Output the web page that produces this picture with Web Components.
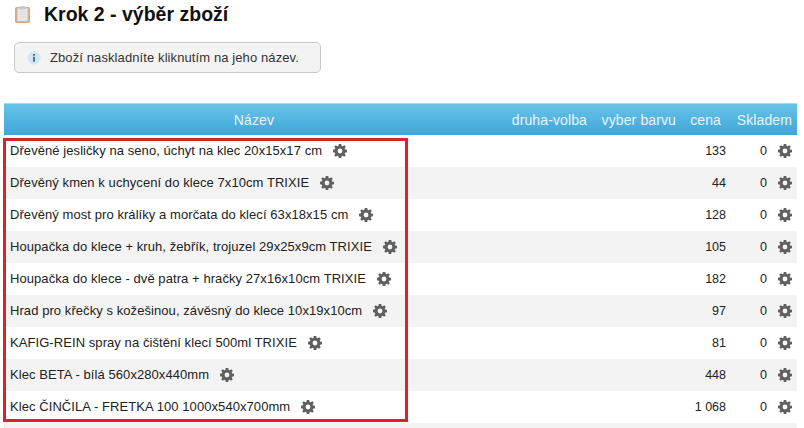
<!DOCTYPE html>
<html lang="cs"><head><meta charset="utf-8"><style>
html,body{margin:0;padding:0;background:#fff}
body{width:804px;height:428px;overflow:hidden;font-family:"Liberation Sans",Arial,sans-serif;color:#222}
</style></head><body>
<step-page>
<page-title slot="title">Krok 2 - výběr zboží</page-title>
<info-note slot="note">Zboží naskladníte kliknutím na jeho název.</info-note>
<goods-table slot="table">
<goods-row price="133">Dřevěné jesličky na seno, úchyt na klec 20x15x17 cm</goods-row>
<goods-row price="44">Dřevěný kmen k uchycení do klece 7x10cm TRIXIE</goods-row>
<goods-row price="128">Dřevěný most pro králíky a morčata do klecí 63x18x15 cm</goods-row>
<goods-row price="105">Houpačka do klece + kruh, žebřík, trojuzel 29x25x9cm TRIXIE</goods-row>
<goods-row price="182">Houpačka do klece - dvě patra + hračky 27x16x10cm TRIXIE</goods-row>
<goods-row price="97">Hrad pro křečky s kožešinou, závěsný do klece 10x19x10cm</goods-row>
<goods-row price="81">KAFIG-REIN spray na čištění klecí 500ml TRIXIE</goods-row>
<goods-row price="448">Klec BETA - bílá 560x280x440mm</goods-row>
<goods-row price="1 068">Klec ČINČILA - FRETKA 100 1000x540x700mm</goods-row>
<goods-row price=""></goods-row>
</goods-table>
</step-page>
<script>
const GEAR=`<svg width="14" height="14" viewBox="0 0 14 14" aria-hidden="true"><path fill="#5f5f5f" fill-rule="evenodd" d="M5.7 0h2.6l.35 1.9c.35.12.68.26 1 .45L11.2 1.2 12.8 2.8 11.65 4.4c.19.32.33.65.45 1L14 5.7v2.6l-1.9.35c-.12.35-.26.68-.45 1l1.15 1.55-1.6 1.6-1.55-1.15c-.32.19-.65.33-1 .45L8.3 14H5.7l-.35-1.9c-.35-.12-.68-.26-1-.45L2.8 12.8 1.2 11.2l1.15-1.55c-.19-.32-.33-.65-.45-1L0 8.3V5.7l1.9-.35c.12-.35.26-.68.45-1L1.2 2.8 2.8 1.2l1.55 1.15c.32-.19.65-.33 1-.45zM7 4.6a2.4 2.4 0 1 0 0 4.8 2.4 2.4 0 0 0 0-4.8z"/></svg>`;
function def(name,html){customElements.define(name,class extends HTMLElement{
 constructor(){super();this.attachShadow({mode:'open'}).innerHTML=html}});}
def('step-page',`<style>:host{display:block;position:relative;height:428px;overflow:hidden}
.wrap{display:flex;flex-direction:column;padding:0 4px 0 4px}
.red{position:absolute;left:3px;top:138px;width:399px;height:278px;border:3px solid #d9222c;pointer-events:none}
</style><div class="wrap"><slot name="title"></slot><slot name="note"></slot><slot name="table"></slot></div><div class="red"></div>`);
def('page-title',`<style>:host{display:flex;align-items:center;gap:14px;height:28px;padding-left:11px;font:bold 19.5px/28px "Liberation Sans",Arial,sans-serif;color:#111}
svg{flex:none}</style>
<svg width="15" height="17" viewBox="0 0 15 17" aria-hidden="true"><rect x=".5" y="1.5" width="14" height="15" rx="1" fill="#d8ae8e" stroke="#d9a67e"/><rect x="2.5" y="2.5" width="10" height="12.5" fill="#e6e8ea" stroke="#d3d6d9" stroke-width=".6"/><rect x="4.5" y="0" width="6" height="3.5" rx="1" fill="#c6cacd"/><path d="M4 6h7M4 8.5h7M4 11h7" stroke="#d8dbdd" stroke-width="1"/></svg>
<span><slot></slot></span>`);
def('info-note',`<style>:host{display:flex;align-items:center;gap:9px;box-sizing:border-box;width:307px;height:31px;margin:14px 0 30px 10px;padding:0 0 0 12px;border:1px solid #c9c9c9;border-radius:5px;background:#f3f3f3;font:13px/16px "Liberation Sans",Arial,sans-serif;letter-spacing:.1px;color:#333}
svg{flex:none}</style>
<svg width="14" height="14" viewBox="0 0 14 14" aria-hidden="true"><circle cx="7" cy="7" r="6.5" fill="#d5e4ee" stroke="#e6edf2"/><rect x="6" y="3" width="2" height="1.8" fill="#2f7fb5"/><rect x="6" y="5.8" width="2" height="5" fill="#2f7fb5"/></svg>
<span><slot></slot></span>`);
def('goods-table',`<style>:host{display:block;width:793px;border-left:1px solid #e4e4e4;box-sizing:border-box;font:13px/16px "Liberation Sans",Arial,sans-serif;letter-spacing:.07px;color:#222}
.h{display:grid;grid-template-columns:500px 83px 89px 45px 76px;height:32px;align-items:center;margin-left:-1px;width:793px;background:linear-gradient(#67c3e8,#3ea6d8);border-top:1px solid #a6d9ef;box-sizing:border-box;color:#e6f5fc;font:14px/16px "Liberation Sans",Arial,sans-serif;letter-spacing:.12px}
.h span{white-space:nowrap}.c{text-align:center}.r{text-align:right}
::slotted(goods-row:nth-of-type(even)){background:#f3f3f3}
</style><div class="h"><span class="c">Název</span><span class="r">druha-volba</span><span class="r">vyber barvu</span><span class="r">cena</span><span class="r" style="padding-right:5px">Skladem</span></div><slot></slot>`);
customElements.define('goods-row',class extends HTMLElement{
 constructor(){super();const p=this.getAttribute('price');const empty=!this.textContent.trim();
 this.attachShadow({mode:'open'}).innerHTML=`<style>:host{display:grid;grid-template-columns:663px 58px 41px 29px;align-items:center;height:32px;white-space:nowrap}
 .n{display:flex;align-items:center;gap:11px;padding-left:5px}.p,.q{text-align:right;letter-spacing:0;font-size:12.5px}svg{display:block}.g{padding-left:11px}</style>
 ${empty?'':`<div class="n"><span><slot></slot></span>${GEAR}</div><div class="p">${p}</div><div class="q">0</div><div class="g">${GEAR}</div>`}`;}
});
</script></body></html>
